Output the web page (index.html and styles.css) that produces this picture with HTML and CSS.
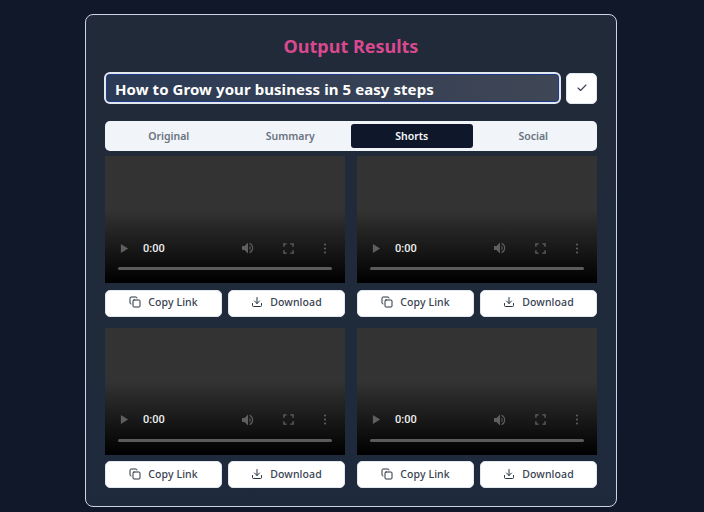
FILE: index.html
```html
<!DOCTYPE html>
<html lang="en">
<head>
<meta charset="utf-8">
<title>Output Results</title>
<link rel="stylesheet" href="styles.css">
</head>
<body>
<main class="panel">
  <h1 class="title">Output Results</h1>
  <div class="title-row">
    <input class="title-input" type="text" value="How to Grow your business in 5 easy steps">
    <button class="check-btn" aria-label="Confirm">
      <svg width="12" height="12" viewBox="0 0 24 24" fill="none" stroke="#374151" stroke-width="2.2" stroke-linecap="round" stroke-linejoin="round"><path d="M20 6 9 17l-5-5"/></svg>
    </button>
  </div>
  <div class="tabs">
    <div class="tab">Original</div>
    <div class="tab">Summary</div>
    <div class="tab active">Shorts</div>
    <div class="tab">Social</div>
  </div>
  <div class="grid">
    <section class="clip">
      <div class="video">
        <div class="controls">
          <svg class="ctl play" viewBox="0 0 10 12"><path d="M1 1v10l8-5z"/></svg>
          <span class="time">0:00</span>
          <svg class="ctl vol" viewBox="0 0 14 14"><path d="M1 5v4h2.500L7 12.500V1.500L3.500 5z"/><path d="M8.500 4.500a3.200 3.200 0 0 1 0 5zM8.500 1.800v1.300a4.200 4.200 0 0 1 0 7.800v1.300a5.500 5.500 0 0 0 0-10.400z"/></svg>
          <svg class="ctl full" viewBox="0 0 12 12"><path d="M1 4V1h3M8 1h3v3M11 8v3H8M4 11H1V8"/></svg>
          <svg class="ctl more" viewBox="0 0 4 12"><circle cx="2" cy="1.700" r="1.150"/><circle cx="2" cy="6" r="1.150"/><circle cx="2" cy="10.300" r="1.150"/></svg>
        </div>
        <div class="track"></div>
      </div>
      <div class="actions">
        <button class="btn"><svg class="ico" viewBox="0 0 24 24"><rect x="8" y="8" width="14" height="14" rx="2"/><path d="M4 16c-1.100 0-2-.9-2-2V4c0-1.100.9-2 2-2h10c1.100 0 2 .9 2 2"/></svg>Copy Link</button>
        <button class="btn"><svg class="ico" viewBox="0 0 24 24"><path d="M21 15v4a2 2 0 0 1-2 2H5a2 2 0 0 1-2-2v-4"/><path d="m7 10 5 5 5-5"/><path d="M12 15V3"/></svg>Download</button>
      </div>
    </section>
    <section class="clip">
      <div class="video">
        <div class="controls">
          <svg class="ctl play" viewBox="0 0 10 12"><path d="M1 1v10l8-5z"/></svg>
          <span class="time">0:00</span>
          <svg class="ctl vol" viewBox="0 0 14 14"><path d="M1 5v4h2.500L7 12.500V1.500L3.500 5z"/><path d="M8.500 4.500a3.200 3.200 0 0 1 0 5zM8.500 1.800v1.300a4.200 4.200 0 0 1 0 7.800v1.300a5.500 5.500 0 0 0 0-10.400z"/></svg>
          <svg class="ctl full" viewBox="0 0 12 12"><path d="M1 4V1h3M8 1h3v3M11 8v3H8M4 11H1V8"/></svg>
          <svg class="ctl more" viewBox="0 0 4 12"><circle cx="2" cy="1.700" r="1.150"/><circle cx="2" cy="6" r="1.150"/><circle cx="2" cy="10.300" r="1.150"/></svg>
        </div>
        <div class="track"></div>
      </div>
      <div class="actions">
        <button class="btn"><svg class="ico" viewBox="0 0 24 24"><rect x="8" y="8" width="14" height="14" rx="2"/><path d="M4 16c-1.100 0-2-.9-2-2V4c0-1.100.9-2 2-2h10c1.100 0 2 .9 2 2"/></svg>Copy Link</button>
        <button class="btn"><svg class="ico" viewBox="0 0 24 24"><path d="M21 15v4a2 2 0 0 1-2 2H5a2 2 0 0 1-2-2v-4"/><path d="m7 10 5 5 5-5"/><path d="M12 15V3"/></svg>Download</button>
      </div>
    </section>
    <section class="clip">
      <div class="video">
        <div class="controls">
          <svg class="ctl play" viewBox="0 0 10 12"><path d="M1 1v10l8-5z"/></svg>
          <span class="time">0:00</span>
          <svg class="ctl vol" viewBox="0 0 14 14"><path d="M1 5v4h2.500L7 12.500V1.500L3.500 5z"/><path d="M8.500 4.500a3.200 3.200 0 0 1 0 5zM8.500 1.800v1.300a4.200 4.200 0 0 1 0 7.800v1.300a5.500 5.500 0 0 0 0-10.400z"/></svg>
          <svg class="ctl full" viewBox="0 0 12 12"><path d="M1 4V1h3M8 1h3v3M11 8v3H8M4 11H1V8"/></svg>
          <svg class="ctl more" viewBox="0 0 4 12"><circle cx="2" cy="1.700" r="1.150"/><circle cx="2" cy="6" r="1.150"/><circle cx="2" cy="10.300" r="1.150"/></svg>
        </div>
        <div class="track"></div>
      </div>
      <div class="actions">
        <button class="btn"><svg class="ico" viewBox="0 0 24 24"><rect x="8" y="8" width="14" height="14" rx="2"/><path d="M4 16c-1.100 0-2-.9-2-2V4c0-1.100.9-2 2-2h10c1.100 0 2 .9 2 2"/></svg>Copy Link</button>
        <button class="btn"><svg class="ico" viewBox="0 0 24 24"><path d="M21 15v4a2 2 0 0 1-2 2H5a2 2 0 0 1-2-2v-4"/><path d="m7 10 5 5 5-5"/><path d="M12 15V3"/></svg>Download</button>
      </div>
    </section>
    <section class="clip">
      <div class="video">
        <div class="controls">
          <svg class="ctl play" viewBox="0 0 10 12"><path d="M1 1v10l8-5z"/></svg>
          <span class="time">0:00</span>
          <svg class="ctl vol" viewBox="0 0 14 14"><path d="M1 5v4h2.500L7 12.500V1.500L3.500 5z"/><path d="M8.500 4.500a3.200 3.200 0 0 1 0 5zM8.500 1.800v1.300a4.200 4.200 0 0 1 0 7.800v1.300a5.500 5.500 0 0 0 0-10.400z"/></svg>
          <svg class="ctl full" viewBox="0 0 12 12"><path d="M1 4V1h3M8 1h3v3M11 8v3H8M4 11H1V8"/></svg>
          <svg class="ctl more" viewBox="0 0 4 12"><circle cx="2" cy="1.700" r="1.150"/><circle cx="2" cy="6" r="1.150"/><circle cx="2" cy="10.300" r="1.150"/></svg>
        </div>
        <div class="track"></div>
      </div>
      <div class="actions">
        <button class="btn"><svg class="ico" viewBox="0 0 24 24"><rect x="8" y="8" width="14" height="14" rx="2"/><path d="M4 16c-1.100 0-2-.9-2-2V4c0-1.100.9-2 2-2h10c1.100 0 2 .9 2 2"/></svg>Copy Link</button>
        <button class="btn"><svg class="ico" viewBox="0 0 24 24"><path d="M21 15v4a2 2 0 0 1-2 2H5a2 2 0 0 1-2-2v-4"/><path d="m7 10 5 5 5-5"/><path d="M12 15V3"/></svg>Download</button>
      </div>
    </section>
  </div>
</main>
</body>
</html>
```
FILE: styles.css
```css
* { box-sizing: border-box; }
html, body { height: 100%; }
body {
  margin: 0;
  padding: 14px 87px 0 85px;
  background: #101829;
  font-family: "Noto Sans", "Open Sans", sans-serif;
  overflow: hidden;
}
.panel {
  width: 532px;
  height: 493px;
  padding: 18px 19px 0 19px;
  background: linear-gradient(180deg, #212a38, #1e2a3c);
  border: 1px solid #cbd5e1;
  border-radius: 8px;
}
.title {
  margin: 0;
  height: 26px;
  line-height: 26px;
  text-align: center;
  font-size: 18px;
  font-weight: 700;
  color: #d9498f;
}
.title-row {
  display: flex;
  gap: 5px;
  margin-top: 13px;
  align-items: center;
}
.title-input {
  width: 458px;
  height: 32px;
  margin-left: -1px;
  padding: 2px 9px 0;
  background: linear-gradient(90deg, #2b3a55, #3f4655);
  border: 2px solid #e2e8f0;
  border-radius: 6px;
  box-shadow: inset 0 0 0 1px #1e3a8a;
  color: #fff;
  font: 700 15px "Noto Sans", sans-serif;
  letter-spacing: 0.07px;
  outline: none;
}
.check-btn {
  display: flex;
  align-items: center;
  justify-content: center;
  width: 31px;
  height: 31px;
  padding: 0;
  background: #fff;
  border: 1px solid #e2e8f0;
  border-radius: 5px;
}
.tabs {
  display: grid;
  grid-template-columns: repeat(4, 1fr);
  height: 30px;
  margin-top: 17px;
  padding: 3px;
  background: #f1f5f9;
  border-radius: 5px;
}
.tab {
  display: flex;
  align-items: center;
  justify-content: center;
  font-size: 10.5px;
  font-weight: 600;
  color: #6b7280;
  border-radius: 3px;
}
.tab.active {
  background: #0f172a;
  color: #f8fafc;
}
.grid {
  display: grid;
  grid-template-columns: 240px 240px;
  column-gap: 12px;
  row-gap: 11px;
  margin-top: 5px;
}
.video {
  display: flex;
  flex-direction: column;
  justify-content: flex-end;
  height: 127px;
  padding: 0 13px 13px;
  background: linear-gradient(180deg, #333 0, #333 42%, #000 100%);
}
.controls {
  display: flex;
  align-items: center;
  height: 14px;
  margin-bottom: 12px;
}
.ctl { display: block; flex: none; }
.play { width: 9px; height: 11px; fill: #5f5f5f; margin-left: 2px; }
.time { margin-left: 14px; font: 500 11px Roboto, sans-serif; color: #f1f1f1; }
.vol { width: 14px; height: 14px; fill: #5f5f5f; margin-left: 76px; }
.full { width: 11px; height: 11px; fill: none; stroke: #5f5f5f; stroke-width: 1.5; margin-left: 28px; }
.more { width: 4px; height: 11px; fill: #5f5f5f; margin-left: 29px; }
.track { height: 3px; background: #5b5b5b; border-radius: 2px; }
.actions {
  display: grid;
  grid-template-columns: 117px 117px;
  column-gap: 6px;
  margin-top: 6.5px;
}
.btn {
  display: flex;
  align-items: center;
  justify-content: center;
  gap: 7px;
  height: 27px;
  padding: 0 0 2px;
  background: #fff;
  border: 1px solid #e2e8f0;
  border-radius: 5px;
  color: #374151;
  font: 500 10.5px "Noto Sans", sans-serif;
  letter-spacing: 0.1px;
}
.ico {
  width: 12px;
  height: 12px;
  fill: none;
  stroke: #1f2937;
  stroke-width: 1.9;
  stroke-linecap: round;
  stroke-linejoin: round;
}
```
